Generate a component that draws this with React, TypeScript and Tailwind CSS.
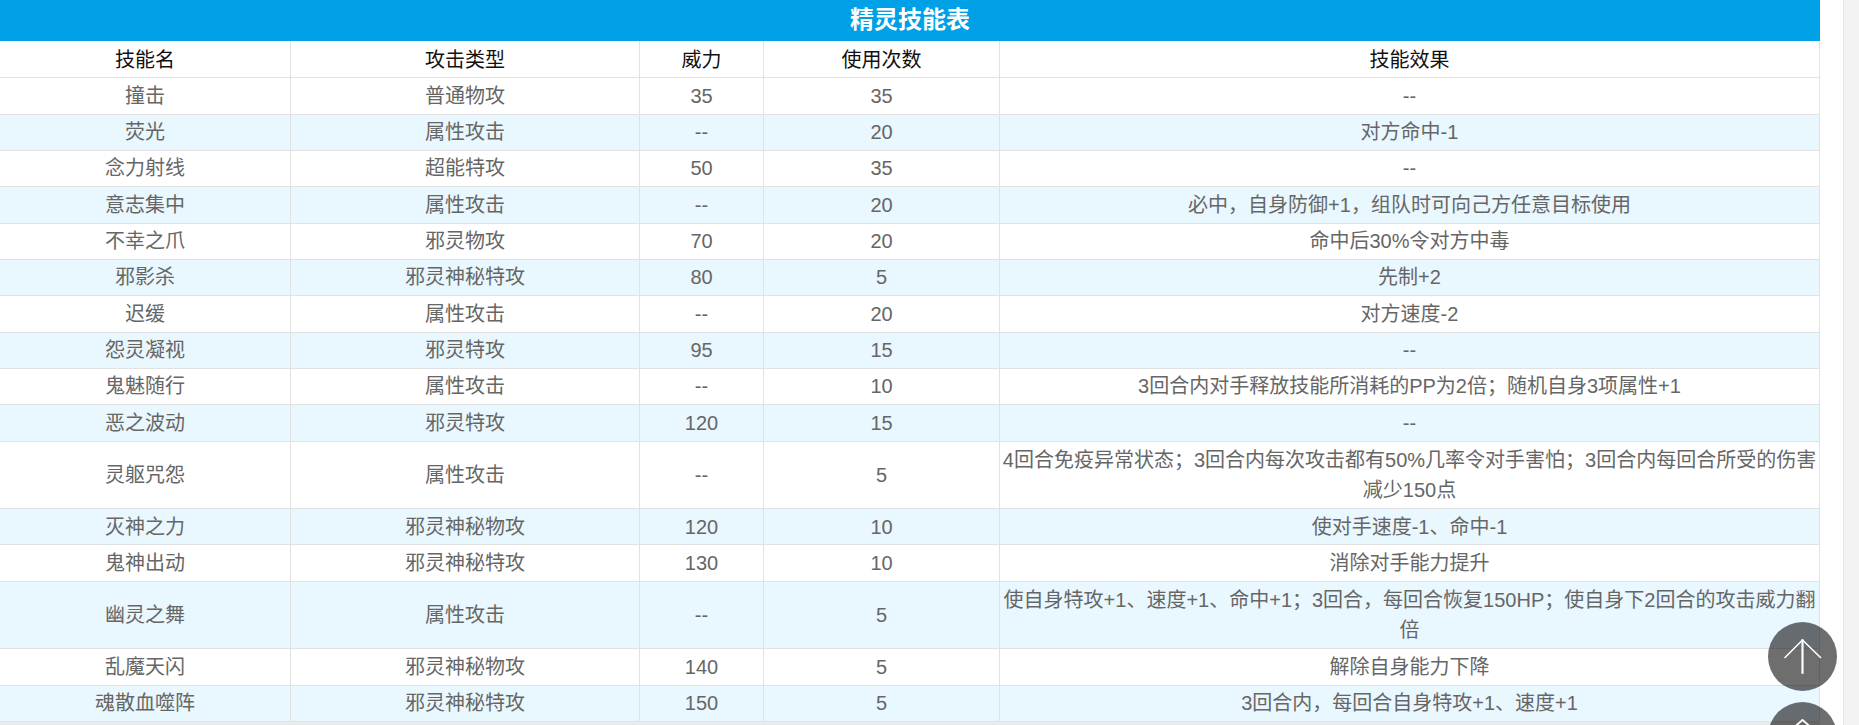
import React from "react";

type Row = [string, string, string, string, React.ReactNode, boolean?];

const rows: Row[] = [
  ["撞击", "普通物攻", "35", "35", "--"],
  ["荧光", "属性攻击", "--", "20", "对方命中-1"],
  ["念力射线", "超能特攻", "50", "35", "--"],
  ["意志集中", "属性攻击", "--", "20", "必中，自身防御+1，组队时可向己方任意目标使用"],
  ["不幸之爪", "邪灵物攻", "70", "20", "命中后30%令对方中毒"],
  ["邪影杀", "邪灵神秘特攻", "80", "5", "先制+2"],
  ["迟缓", "属性攻击", "--", "20", "对方速度-2"],
  ["怨灵凝视", "邪灵特攻", "95", "15", "--"],
  ["鬼魅随行", "属性攻击", "--", "10", "3回合内对手释放技能所消耗的PP为2倍；随机自身3项属性+1"],
  ["恶之波动", "邪灵特攻", "120", "15", "--"],
  [
    "灵躯咒怨",
    "属性攻击",
    "--",
    "5",
    <>
      4回合免疫异常状态；3回合内每次攻击都有50%几率令对手害怕；3回合内每回合所受的伤害
      <br />
      减少150点
    </>,
    true,
  ],
  ["灭神之力", "邪灵神秘物攻", "120", "10", "使对手速度-1、命中-1"],
  ["鬼神出动", "邪灵神秘特攻", "130", "10", "消除对手能力提升"],
  [
    "幽灵之舞",
    "属性攻击",
    "--",
    "5",
    <>
      使自身特攻+1、速度+1、命中+1；3回合，每回合恢复150HP；使自身下2回合的攻击威力翻
      <br />倍
    </>,
    true,
  ],
  ["乱魔天闪", "邪灵神秘物攻", "140", "5", "解除自身能力下降"],
  ["魂散血噬阵", "邪灵神秘特攻", "150", "5", "3回合内，每回合自身特攻+1、速度+1"],
];

const font = { fontFamily: '"Liberation Sans", "Noto Sans CJK SC", sans-serif' };

export default function App() {
  return (
    <div className="relative flex h-[725px] w-full overflow-hidden bg-white" style={font}>
      <div className="flex-1 bg-white">
        <div className="w-[1820px]">
          <div className="flex h-[40.7px] items-center justify-center bg-[#00a0e6] text-[24px] font-bold leading-none text-white">
            精灵技能表
          </div>
          <div className="grid h-[37.6px] grid-cols-[291px_349px_124px_236px_820px] border-b border-[#e2e2e2] bg-white text-[20px] leading-[30px] text-[#111]">
            {["技能名", "攻击类型", "威力", "使用次数", "技能效果"].map((h) => (
              <div key={h} className="flex items-center justify-center border-r border-[#e2e2e2] pt-[2px]">
                {h}
              </div>
            ))}
          </div>
          {rows.map((r, i) => (
            <div
              key={r[0]}
              className={`grid grid-cols-[291px_349px_124px_236px_820px] border-b border-[#e2e2e2] text-[20px] leading-[30.3px] text-[#666] ${
                r[5] ? "h-[67.6px]" : "h-[36.34px]"
              } ${i % 2 === 1 ? "bg-[#e9f7fe]" : "bg-white"}`}
            >
              {[r[0], r[1], r[2], r[3], r[4]].map((c, j) => (
                <div key={j} className="flex items-center justify-center border-r border-[#e2e2e2] text-center">
                  <div>{c}</div>
                </div>
              ))}
            </div>
          ))}
          <div className="h-[10px] bg-[#ebebeb]" />
        </div>
      </div>
      <div className="w-[16px] border-l border-[#e6e6e6] bg-[#f3f3f3]" />

      <div className="absolute left-[1768px] top-[622px] h-[69px] w-[69px] rounded-full bg-black/[0.57]">
        <svg width="69" height="69" viewBox="0 0 69 69" fill="none" stroke="white" strokeLinecap="round">
          <line x1="34.5" y1="18" x2="34.5" y2="51" strokeWidth="2.2" />
          <polyline points="17,35.5 34.5,18 52.5,35.5" strokeWidth="1.6" />
        </svg>
      </div>
      <div className="absolute left-[1768px] top-[702px] h-[69px] w-[69px] rounded-full bg-black/[0.57]">
        <svg width="69" height="69" viewBox="0 0 69 69" fill="none" stroke="white" strokeWidth="1.8">
          <polyline points="24,27 34.5,18 45,27" />
          <rect x="26" y="26" width="17" height="16" />
        </svg>
      </div>
    </div>
  );
}
